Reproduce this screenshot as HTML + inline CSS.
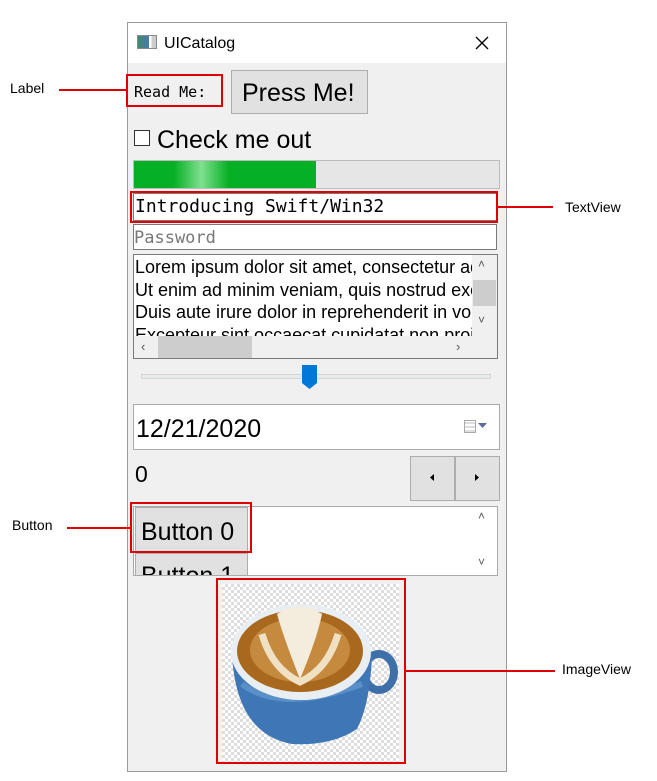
<!DOCTYPE html>
<html><head><style>
*{margin:0;padding:0;box-sizing:border-box}
body{width:657px;height:781px;background:#fff;position:relative;overflow:hidden;font-family:"Segoe UI","Liberation Sans",sans-serif}
.a{position:absolute}
.mono{font-family:"DejaVu Sans Mono","Liberation Mono",monospace}
.red{position:absolute;border:2px solid #e00000}
.ln{position:absolute;height:2px;background:#e00000}
.lbl{position:absolute;font-size:14px;color:#000;font-family:"Liberation Sans",sans-serif}
.fld{position:absolute;background:#fff;border:1px solid #7a7a7a}
.btn{position:absolute;background:#e1e1e1;border:1px solid #adadad}
</style></head><body>
<div class="a" style="left:127px;top:22px;width:380px;height:750px;border:1px solid #9a9a9a;background:#f0f0f0"></div>
<div class="a" style="left:128px;top:23px;width:378px;height:40px;background:#fff"></div>
<div class="a" style="left:137px;top:35px;width:20px;height:14px;border:1px solid #8a8a8a;background:linear-gradient(90deg,#3a8a6a 0,#4a7ab0 60%,#fff 60%,#fff 75%,#ccc 75%)"></div>
<div class="a" style="left:164px;top:35px;font-size:16px;color:#000">UICatalog</div>
<svg class="a" style="left:475px;top:36px" width="14" height="14"><path d="M1 1L13 13M13 1L1 13" stroke="#000" stroke-width="1.3"/></svg>

<div class="a mono" style="left:134px;top:83px;font-size:15px">Read Me:</div>
<div class="red" style="left:126px;top:74px;width:97px;height:33px"></div>
<div class="btn" style="left:231px;top:70px;width:137px;height:44px"></div>
<div class="a" style="left:242px;top:79px;font-size:25px">Press Me!</div>

<div class="a" style="left:134px;top:130px;width:16px;height:16px;border:1px solid #333;background:#fff"></div>
<div class="a" style="left:157px;top:126px;font-size:25px">Check me out</div>

<div class="a" style="left:133px;top:160px;width:367px;height:29px;background:#e6e6e6;border:1px solid #bcbcbc"></div>
<div class="a" style="left:134px;top:161px;width:182px;height:27px;background:linear-gradient(90deg,#06b025 0,#06b025 22%,#7fe08f 37%,#06b025 52%,#06b025 100%)"></div>

<div class="fld" style="left:133px;top:193px;width:364px;height:28px"></div>
<div class="a mono" style="left:135px;top:196px;font-size:18px">Introducing Swift/Win32</div>
<div class="red" style="left:130px;top:191px;width:368px;height:32px"></div>

<div class="fld" style="left:133px;top:224px;width:364px;height:26px"></div>
<div class="a mono" style="left:134px;top:228px;font-size:17px;color:#777">Password</div>

<div class="fld" style="left:133px;top:254px;width:365px;height:105px;overflow:hidden">
<div style="position:absolute;left:1px;top:1px;font-family:'Liberation Sans',sans-serif;font-size:18px;line-height:22.7px;white-space:nowrap;color:#000">Lorem ipsum dolor sit amet, consectetur adipiscing<br>Ut enim ad minim veniam, quis nostrud exercitation<br>Duis aute irure dolor in reprehenderit in voluptate<br>Excepteur sint occaecat cupidatat non proident</div>
<div style="position:absolute;left:338px;top:0;width:25px;height:81px;background:#f0f0f0"></div>
<div style="position:absolute;left:339px;top:25px;width:23px;height:26px;background:#cdcdcd"></div>
<div style="position:absolute;left:0;top:81px;width:363px;height:22px;background:#f0f0f0"></div>
<div style="position:absolute;left:24px;top:81px;width:94px;height:22px;background:#cdcdcd"></div>
<div style="position:absolute;left:344px;top:2px;font-size:12px;color:#555">˄</div>
<div style="position:absolute;left:344px;top:58px;font-size:12px;color:#555">˅</div>
<div style="position:absolute;left:7px;top:84px;font-size:13px;color:#555">‹</div>
<div style="position:absolute;left:322px;top:84px;font-size:13px;color:#555">›</div>
</div>

<div class="a" style="left:141px;top:374px;width:350px;height:5px;background:#e7eaea;border:1px solid #d6d6d6"></div>
<svg class="a" style="left:302px;top:365px" width="16" height="25"><path d="M0 0H15V18L7.5 24L0 18Z" fill="#0078d7"/></svg>

<div class="fld" style="left:133px;top:404px;width:367px;height:46px;border-color:#aaa"></div>
<div class="a" style="left:136px;top:415px;font-size:25px">12/21/2020</div>
<div class="a" style="left:464px;top:420px;width:12px;height:13px;border:1px solid #aaa;background:repeating-linear-gradient(0deg,#ddd 0 2px,#fff 2px 4px)"></div>
<svg class="a" style="left:478px;top:423px" width="9" height="6"><path d="M0 0H9L4.5 5Z" fill="#5a6f9a"/></svg>

<div class="a" style="left:135px;top:461px;font-size:23px">0</div>
<div class="btn" style="left:410px;top:456px;width:45px;height:45px"></div>
<div class="btn" style="left:455px;top:456px;width:45px;height:45px"></div>
<svg class="a" style="left:430px;top:474px" width="5" height="7"><path d="M4 0V7L0 3.5Z" fill="#000"/></svg>
<svg class="a" style="left:475px;top:474px" width="5" height="7"><path d="M0 0V7L4 3.5Z" fill="#000"/></svg>

<div class="fld" style="left:133px;top:506px;width:365px;height:70px;overflow:hidden;border-color:#aaa">
<div style="position:absolute;left:1px;top:0;width:113px;height:45px;background:#e1e1e1;border:1px solid #adadad"></div>
<div style="position:absolute;left:7px;top:11px;font-size:25px">Button 0</div>
<div style="position:absolute;left:1px;top:46px;width:113px;height:40px;background:#e1e1e1;border:1px solid #adadad"></div>
<div style="position:absolute;left:7px;top:55px;font-size:25px">Button 1</div>
<div style="position:absolute;left:339px;top:0;width:25px;height:70px;background:#fff"></div>
<div style="position:absolute;left:344px;top:2px;font-size:12px;color:#555">˄</div>
<div style="position:absolute;left:344px;top:48px;font-size:12px;color:#555">˅</div>
</div>
<div class="red" style="left:130px;top:502px;width:122px;height:51px"></div>

<div class="a" style="left:222px;top:584px;width:177px;height:178px;background-color:#fff;background-image:linear-gradient(45deg,#ddd 25%,transparent 25%,transparent 75%,#ddd 75%),linear-gradient(45deg,#ddd 25%,transparent 25%,transparent 75%,#ddd 75%);background-size:6px 6px;background-position:0 0,3px 3px"></div>
<svg class="a" style="left:222px;top:584px" width="177" height="178">
<ellipse cx="157" cy="88" rx="15" ry="18" fill="none" stroke="#3d6fa8" stroke-width="8"/>
<path d="M10 70 Q14 150 70 160 Q110 162 135 145 Q148 120 150 72 Z" fill="#3e76b6"/>
<path d="M20 100 Q60 130 140 100" fill="none" stroke="#5a8fc8" stroke-width="6"/>
<ellipse cx="79" cy="68" rx="70" ry="48" fill="#e9eef3"/>
<ellipse cx="78" cy="67" rx="63" ry="41" fill="#a8681e"/>
<ellipse cx="78" cy="66" rx="50" ry="32" fill="#c68a3e"/>
<path d="M55 30 Q78 15 100 30 Q95 55 78 95 Q62 55 55 30Z" fill="#f4ecdc"/>
<path d="M40 50 Q50 85 78 98 Q106 85 116 50" fill="none" stroke="#f0e0c4" stroke-width="7"/>
</svg>
<div class="red" style="left:216px;top:578px;width:190px;height:186px"></div>

<div class="lbl" style="left:10px;top:80px">Label</div>
<div class="ln" style="left:59px;top:89px;width:68px"></div>
<div class="lbl" style="left:565px;top:199px">TextView</div>
<div class="ln" style="left:498px;top:206px;width:55px"></div>
<div class="lbl" style="left:12px;top:517px">Button</div>
<div class="ln" style="left:67px;top:527px;width:64px"></div>
<div class="lbl" style="left:562px;top:661px">ImageView</div>
<div class="ln" style="left:405px;top:670px;width:150px"></div>
</body></html>
